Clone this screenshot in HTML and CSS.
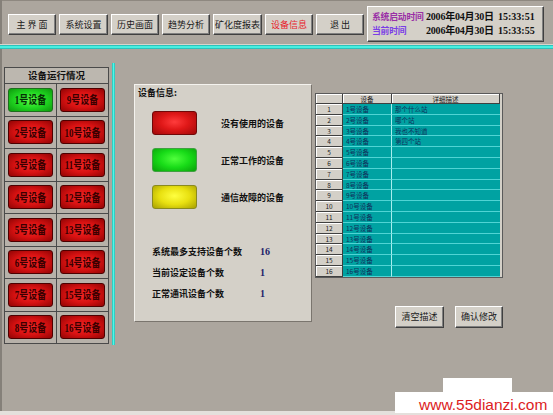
FILE: index.html
```html
<!DOCTYPE html>
<html lang="zh-CN">
<head>
<meta charset="utf-8">
<title>设备信息</title>
<link rel="stylesheet" href="styles.css">
</head>
<body>
<div class="screen">
  <header class="topbar">
    <nav class="nav">
      <button class="btn">主 界 面</button>
      <button class="btn w49">系统设置</button>
      <button class="btn">历史画面</button>
      <button class="btn">趋势分析</button>
      <button class="btn w49">矿化度报表</button>
      <button class="btn active">设备信息</button>
      <button class="btn">退 出</button>
    </nav>
    <div class="clock">
      <span class="lbl start">系统启动时间</span><span class="date">2006年04月30日</span><span class="time">15:33:51</span>
      <span class="lbl now">当前时间</span><span class="date">2006年04月30日</span><span class="time">15:33:55</span>
    </div>
  </header>
  <div class="hline-light"></div>
  <div class="hline"></div>

  <main class="main">
    <section class="devpanel">
      <div class="devhead">设备运行情况</div>
      <div class="cell"><div class="dev ok"><span>1号设备</span></div></div>
      <div class="cell"><div class="dev"><span>9号设备</span></div></div>
      <div class="cell"><div class="dev"><span>2号设备</span></div></div>
      <div class="cell"><div class="dev"><span>10号设备</span></div></div>
      <div class="cell"><div class="dev"><span>3号设备</span></div></div>
      <div class="cell"><div class="dev"><span>11号设备</span></div></div>
      <div class="cell"><div class="dev"><span>4号设备</span></div></div>
      <div class="cell"><div class="dev"><span>12号设备</span></div></div>
      <div class="cell"><div class="dev"><span>5号设备</span></div></div>
      <div class="cell"><div class="dev"><span>13号设备</span></div></div>
      <div class="cell"><div class="dev"><span>6号设备</span></div></div>
      <div class="cell"><div class="dev"><span>14号设备</span></div></div>
      <div class="cell"><div class="dev"><span>7号设备</span></div></div>
      <div class="cell"><div class="dev"><span>15号设备</span></div></div>
      <div class="cell"><div class="dev"><span>8号设备</span></div></div>
      <div class="cell"><div class="dev"><span>16号设备</span></div></div>
    </section>

    <div class="vline"></div>

    <section class="info">
      <div class="info-title">设备信息:</div>
      <div class="legend">
        <div class="swatch red"></div><div class="legend-label">没有使用的设备</div>
        <div class="swatch green"></div><div class="legend-label">正常工作的设备</div>
        <div class="swatch yellow"></div><div class="legend-label">通信故障的设备</div>
      </div>
      <div class="stats">
        <span>系统最多支持设备个数</span><span class="val">16</span>
        <span>当前设定设备个数</span><span class="val">1</span>
        <span>正常通讯设备个数</span><span class="val">1</span>
      </div>
    </section>

    <section class="right">
      <div class="tblwrap">
        <div class="tbl">
          <div class="hc"></div><div class="hc">设备</div><div class="hc">详细描述</div>
          <div class="rh">1</div><div class="c2">1号设备</div><div class="c3">那个什么站</div>
          <div class="rh">2</div><div class="c2">2号设备</div><div class="c3">哪个站</div>
          <div class="rh">3</div><div class="c2">3号设备</div><div class="c3">我也不知道</div>
          <div class="rh">4</div><div class="c2">4号设备</div><div class="c3">第四个站</div>
          <div class="rh">5</div><div class="c2">5号设备</div><div class="c3"></div>
          <div class="rh">6</div><div class="c2">6号设备</div><div class="c3"></div>
          <div class="rh">7</div><div class="c2">7号设备</div><div class="c3"></div>
          <div class="rh">8</div><div class="c2">8号设备</div><div class="c3"></div>
          <div class="rh">9</div><div class="c2">9号设备</div><div class="c3"></div>
          <div class="rh">10</div><div class="c2">10号设备</div><div class="c3"></div>
          <div class="rh">11</div><div class="c2">11号设备</div><div class="c3"></div>
          <div class="rh">12</div><div class="c2">12号设备</div><div class="c3"></div>
          <div class="rh">13</div><div class="c2">13号设备</div><div class="c3"></div>
          <div class="rh">14</div><div class="c2">14号设备</div><div class="c3"></div>
          <div class="rh">15</div><div class="c2">15号设备</div><div class="c3"></div>
          <div class="rh">16</div><div class="c2">16号设备</div><div class="c3"></div>
        </div>
      </div>
      <div class="actions">
        <button class="btn w49">清空描述</button>
        <button class="btn">确认修改</button>
      </div>
    </section>
  </main>

  <footer class="bottom"></footer>

  <div class="watermark">
    <span class="wm-notch"></span>
    <span class="wm-text">www.55dianzi.com</span>
  </div>
</div>
</body>
</html>
```

FILE: styles.css
```css
html, body {
  margin: 0;
  padding: 0;
}

body {
  width: 553px;
  height: 415px;
  overflow: hidden;
  background: #aca69e;
  font-family: "Noto Sans CJK SC", "Liberation Sans", sans-serif;
}

.screen {
  position: relative;
  width: 553px;
  height: 415px;
  display: flex;
  flex-direction: column;
  box-shadow: inset 2px 0 0 #858079, inset 0 1px 0 #8e8880;
  overflow: hidden;
}

/* ---------- top bar ---------- */
.topbar {
  box-sizing: border-box;
  height: 44px;
  padding-top: 4px;
  display: flex;
  align-items: center;
}

.nav {
  display: flex;
  gap: 3px;
  padding-left: 8px;
}

.btn {
  box-sizing: border-box;
  width: 48px;
  height: 21px;
  margin: 0;
  padding: 0;
  background: #d4d0c8;
  border: 1px solid;
  border-color: #ffffff #404040 #404040 #ffffff;
  box-shadow: inset -1px -1px 0 #808080;
  font-family: "Noto Sans CJK SC", sans-serif;
  font-size: 9px;
  line-height: 19px;
  color: #1a1a1a;
  white-space: nowrap;
}

.btn.w49 {
  width: 49px;
}

.btn.active {
  color: #e8202a;
}

.clock {
  box-sizing: border-box;
  margin-left: 3px;
  width: 177px;
  height: 36px;
  padding: 3px 0 0 4px;
  background: #d4d0c8;
  border: 1px solid;
  border-color: #ffffff #404040 #404040 #ffffff;
  box-shadow: inset -1px -1px 0 #808080;
  display: grid;
  grid-template-columns: 54px 72px auto;
  grid-auto-rows: 14px;
  align-items: center;
  white-space: nowrap;
}

.lbl {
  font-family: "Noto Sans CJK SC", sans-serif;
  font-size: 8.8px;
  font-weight: 700;
  line-height: 14px;
  letter-spacing: -0.2px;
}

.lbl.start {
  color: #9a2fa6;
}

.lbl.now {
  color: #7a3ee6;
}

.date,
.time {
  font-family: "Liberation Serif", "Noto Sans CJK SC", serif;
  font-size: 10px;
  font-weight: 700;
  line-height: 14px;
  color: #111;
}

.date {
  letter-spacing: -0.2px;
}

.hline-light {
  height: 1px;
  background: #d8d4cc;
}

.hline {
  height: 4px;
  background: linear-gradient(180deg, #1ca8a8 0%, #48f0e0 35%, #48f0e0 65%, #1ca8a8 100%);
}

/* ---------- main ---------- */
.main {
  flex: 1;
  display: flex;
  align-items: flex-start;
  padding-left: 4px;
}

.devpanel {
  margin-top: 18px;
  box-sizing: border-box;
  width: 105px;
  border: 1px solid #4a4a4a;
  background: #4a4a4a;
  display: grid;
  grid-template-columns: 1fr 1fr;
  grid-template-rows: 15px repeat(8, 31.5px);
  gap: 1px;
}

.devhead {
  grid-column: 1 / -1;
  background: #bcb7af;
  font-size: 9.5px;
  font-weight: 700;
  line-height: 15px;
  text-align: center;
  color: #111;
}

.cell {
  background: #b7b1a9;
  display: flex;
  align-items: center;
  justify-content: center;
}

.dev {
  box-sizing: border-box;
  width: 45px;
  height: 24px;
  border-radius: 3px;
  border: 1px solid #4c0000;
  background: radial-gradient(ellipse at 50% 50%, #f42626 0%, #d81212 50%, #920404 100%);
  display: flex;
  align-items: center;
  justify-content: center;
}

.dev span {
  display: inline-block;
  font-family: "Liberation Serif", "Noto Sans CJK SC", serif;
  font-size: 9px;
  font-weight: 700;
  color: #3a0000;
  transform: scaleY(1.3);
  white-space: nowrap;
}

.dev.ok {
  border-color: #1e6e1e;
  background: radial-gradient(ellipse at 50% 50%, #5cff48 0%, #22d822 50%, #0c9a0c 100%);
}

.dev.ok span {
  color: #053005;
}

.vline {
  margin-left: 3px;
  margin-top: 14px;
  width: 3px;
  height: 282px;
  background: linear-gradient(90deg, #20b8b0, #50f8e8, #20b8b0);
}

/* ---------- info panel ---------- */
.info {
  box-sizing: border-box;
  margin-left: 19px;
  margin-top: 35px;
  width: 178px;
  height: 238px;
  background: #d4d0c8;
  border: 1px solid;
  border-color: #f4f2ee #7a756e #7a756e #f4f2ee;
}

.info-title {
  padding: 2px 0 0 3px;
  font-size: 9px;
  font-weight: 700;
  line-height: 12px;
  color: #111;
}

.legend {
  margin: 12px 0 0 17px;
  display: grid;
  grid-template-columns: 45px auto;
  column-gap: 24px;
  row-gap: 13px;
  align-items: center;
}

.swatch {
  box-sizing: border-box;
  width: 45px;
  height: 24px;
  border-radius: 3px;
}

.swatch.red {
  border: 1px solid #700808;
  background: radial-gradient(ellipse at 50% 45%, #ff3c3c 0%, #e01818 45%, #a00808 100%);
}

.swatch.green {
  border: 1px solid #40a040;
  background: radial-gradient(ellipse at 50% 45%, #50ff3c 0%, #18dc18 50%, #0aa00a 100%);
}

.swatch.yellow {
  border: 1px solid #8a8a20;
  background: radial-gradient(ellipse at 50% 45%, #ffff40 0%, #e8e010 50%, #a8a000 100%);
}

.legend-label {
  font-size: 9px;
  font-weight: 700;
  color: #111;
  white-space: nowrap;
}

.stats {
  margin: 32px 0 0 17px;
  display: grid;
  grid-template-columns: 108px auto;
  line-height: 21px;
  font-size: 9px;
  font-weight: 700;
  color: #111;
  white-space: nowrap;
}

.stats .val {
  font-family: "Liberation Serif", serif;
  font-size: 10px;
  color: #202068;
}

/* ---------- table ---------- */
.right {
  margin-left: 3px;
  margin-top: 36px;
}

.tblwrap {
  display: inline-block;
  border: 1px solid #5a5a5a;
  background: #d4d0c8;
  padding-right: 2px;
}

.tbl {
  display: grid;
  grid-template-columns: 27px 49px 108px;
  grid-template-rows: 10px;
  grid-auto-rows: 10.8px;
  font-family: "Noto Sans CJK SC", "Liberation Sans", sans-serif;
  font-size: 6.5px;
  line-height: 10px;
}

.hc,
.rh {
  box-sizing: border-box;
  background: #d4d0c8;
  border-right: 1px solid #404040;
  border-bottom: 1px solid #404040;
  box-shadow: inset 1px 1px 0 #ffffff;
  text-align: center;
  color: #222;
  overflow: hidden;
}

.c2,
.c3 {
  box-sizing: border-box;
  background: #00a2a2;
  border-bottom: 1px solid #50d4d4;
  color: #10305a;
  padding-left: 3px;
  white-space: nowrap;
  overflow: hidden;
}

.c2 {
  border-right: 1px solid #a8eeee;
}

.actions {
  display: flex;
  gap: 11px;
  margin-top: 28px;
  padding-left: 80px;
}

.actions .btn {
  height: 22px;
  line-height: 20px;
}

/* ---------- bottom ---------- */
.bottom {
  height: 4px;
  background: #e4e0dc;
}

.watermark {
  position: absolute;
  left: 395px;
  top: 392px;
  width: 158px;
  height: 21px;
  background: #ffffff;
}

.wm-notch {
  position: absolute;
  left: 48px;
  top: -14px;
  width: 69px;
  height: 14px;
  background: #ffffff;
}

.wm-text {
  position: absolute;
  left: 24px;
  top: 5px;
  font-family: "Liberation Sans", sans-serif;
  font-size: 15.5px;
  line-height: 16px;
  color: #dc1c22;
  white-space: nowrap;
}
```
